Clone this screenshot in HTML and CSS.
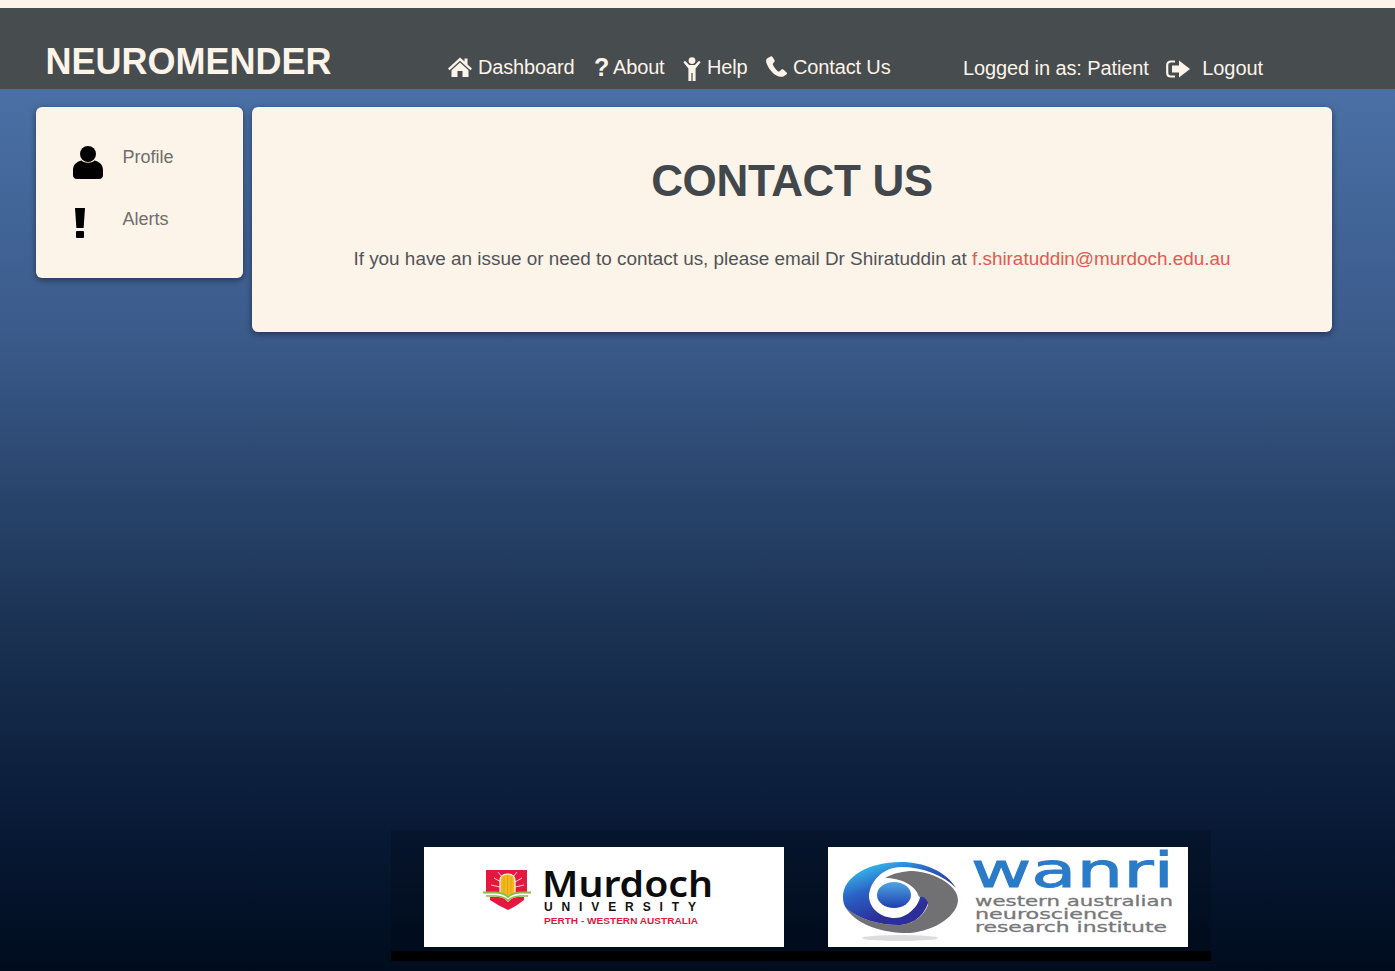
FILE: index.html
```html
<!DOCTYPE html>
<html>
<head>
<meta http-equiv="Content-Type" content="text/html; charset=utf-8"/>
<title>Neuromender</title>
<link rel="stylesheet" href="styles.css">
</head>
<body>

<header class="topbar">
  <a class="brand" href="#">NEUROMENDER</a>
  <nav class="mainnav">
    <a href="#">
      <svg class="ico ico-home" viewBox="0 0 24 20"><path d="M12 0.5 L16.5 4.6 V1.5 H19.5 V7.4 L24 11.5 L22.4 13.2 L12 3.8 L1.6 13.2 L0 11.5 Z"/><path d="M12 5.6 L20.5 13.2 V20 H14.5 V14 H9.5 V20 H3.5 V13.2 Z"/></svg>
      Dashboard</a>
    <a href="#"><span class="ico-q">?</span>About</a>
    <a href="#">
      <svg class="ico ico-help" viewBox="0 0 18 24"><circle cx="9" cy="3.6" r="3.4"/><path d="M0.4 5.2 L2 3.8 L6.2 8 H11.8 L16 3.8 L17.6 5.2 L12.6 11.4 V24 H9.6 V16 H8.4 V24 H5.4 V11.4 Z"/></svg>
      Help</a>
    <a href="#">
      <svg class="ico ico-phone" viewBox="0 0 21 21"><path d="M4.6 0.4 L1.4 2.2 C0.2 3 -0.2 4.6 0.3 6.4 C1.5 10.4 5.4 16.6 10.6 19.6 C13 21 15.6 21.2 17.4 20.4 L20.4 18.4 C21.2 17.8 21.2 17 20.6 16.4 L17.4 13.6 C16.8 13 16 13 15.4 13.6 L13.6 15.2 C13 15.6 12.4 15.6 11.8 15.2 C9.6 13.4 7.8 11 6.8 8.6 C6.6 8 6.8 7.6 7.2 7.2 L8.4 5.8 C8.8 5.2 8.8 4.6 8.4 4 L6.4 0.8 C6 0.2 5.2 0 4.6 0.4 Z"/></svg>
      Contact Us</a>
  </nav>
  <div class="userbox">
    <span>Logged in as: Patient</span>
    <a href="#">
      <svg class="ico ico-logout" viewBox="0 0 24 18"><path class="bracket" d="M9 1.5 H5 C2.6 1.5 1.2 2.9 1.2 5.3 V12.7 C1.2 15.1 2.6 16.5 5 16.5 H9"/><path d="M6 5.5 H13 V0.5 L24 9 L13 17.5 V12.5 H6 Z"/></svg>
      Logout</a>
  </div>
</header>

<div class="content">
  <aside class="sidebar card">
    <a class="sideitem" href="#">
      <span class="sideicon">
        <svg class="ico-profile" viewBox="0 0 30 33"><circle cx="15" cy="8" r="8"/><path d="M8.5 14.5 C11 17.5 19 17.5 21.5 14.5 C26.5 15.5 30 19 30 24 V29 C30 31.5 28.5 33 26 33 H4 C1.5 33 0 31.5 0 29 V24 C0 19 3.5 15.5 8.5 14.5 Z"/></svg>
      </span>
      Profile</a>
    <a class="sideitem" href="#">
      <span class="sideicon">
        <svg class="ico-alert" viewBox="0 0 10 30"><path d="M0 0 H10 L8.6 20 H1.4 Z"/><rect x="1" y="23" width="8" height="7" rx="1"/></svg>
      </span>
      Alerts</a>
  </aside>

  <main class="panel card">
    <h1>CONTACT US</h1>
    <p>If you have an issue or need to contact us, please email Dr Shiratuddin at <a href="#">f.shiratuddin@murdoch.edu.au</a></p>
  </main>
</div>

<footer class="logos">
  <div class="logorow">
    <svg class="logo" viewBox="0 0 360 100">
      <!-- shield -->
      <path d="M62 23 H103 V47 H62 Z" fill="#e4173e"/>
      <path d="M66 50 H100 V53 C95 57 90 60 84 63 C78 60 72 57 66 53 Z" fill="#e4173e"/>
      <path d="M70 31 L77 35 M67 38 L76 40 M98 31 L91 35 M100 38 L91 40 M74 25 L78 30 M93 25 L89 30" stroke="#fff" stroke-width="0.8"/>
      <path d="M76 49 V34 C76 29 79 27 83.5 27 C88 27 91 29 91 34 V49 Z" fill="#f5b81f" stroke="#fff" stroke-width="1.2"/>
      <path d="M80 30 V48 M83.5 28 V48 M87 30 V48" stroke="#dd9a14" stroke-width="0.7"/>
      <path d="M60 47.3 H72 Q80 47.8 84 51.8 Q88 47.8 96 47.3 H106" fill="none" stroke="#fff" stroke-width="4.5"/>
      <path d="M59 45.5 H72 Q80 46 84 50 Q88 46 96 45.5 H107" fill="none" stroke="#8cbb45" stroke-width="1.8"/>
      <path d="M62 49 H72 Q80 49.5 84 53.5 Q88 49.5 96 49 H104" fill="none" stroke="#8cbb45" stroke-width="1.6"/>
      <text class="mu-name" x="118" y="50" textLength="171" lengthAdjust="spacingAndGlyphs">Murdoch</text>
      <text class="mu-uni" x="120" y="64" textLength="152">UNIVERSITY</text>
      <text class="mu-place" x="120" y="77" textLength="154" lengthAdjust="spacingAndGlyphs">PERTH - WESTERN AUSTRALIA</text>
    </svg>
    <svg class="logo" viewBox="0 0 360 100">
      <defs>
        <linearGradient id="swirlBlue" x1="0" y1="0.2" x2="0.5" y2="1">
          <stop offset="0" stop-color="#35b4ea"/>
          <stop offset="0.35" stop-color="#2a62c4"/>
          <stop offset="0.8" stop-color="#2c2f9a"/>
        </linearGradient>
        <linearGradient id="ballBlue" x1="0" y1="0" x2="0" y2="1">
          <stop offset="0" stop-color="#4fa6e4"/>
          <stop offset="1" stop-color="#1f3fae"/>
        </linearGradient>
      </defs>
      <ellipse cx="72" cy="91" rx="38" ry="3" fill="#dcdcdc"/>
      <path d="M57 31 C66 26 76 24 85 24 C110 26 131 40 130 54 C128 72 100 87 75 86 C50 85 27 76 18 61 C30 72 52 78 70 78 C86 78 96 68 100 58 C98 52 94 49 91 50 C88 38 72 31 57 31 Z" fill="#717173"/>
      <path d="M128 41 C118 24 95 15 73 15 C40 15 15 30 15 50 C15 55 16 58 18 61 C30 72 52 78 70 78 C86 78 96 68 100 56 C99 52 95 49 92 50 C91 58 80 71 67 71 C53 71 42 62 41 50 C41 35 55 20 73 20 C95 20 115 28 128 41 Z" fill="url(#swirlBlue)"/>
      <ellipse cx="66" cy="48" rx="17" ry="13" fill="url(#ballBlue)"/>
      <text class="wa-name" x="143" y="40" textLength="203" lengthAdjust="spacingAndGlyphs">wanri</text>
      <text class="wa-sub" x="147" y="59" textLength="198" lengthAdjust="spacingAndGlyphs">western australian</text>
      <text class="wa-sub" x="147" y="72" textLength="148" lengthAdjust="spacingAndGlyphs">neuroscience</text>
      <text class="wa-sub" x="147" y="85" textLength="192" lengthAdjust="spacingAndGlyphs">research institute</text>
    </svg>
  </div>
</footer>

</body>
</html>
```

FILE: styles.css
```css
html, body {
  margin: 0;
  padding: 0;
}

body {
  height: 971px;
  overflow: hidden;
  display: flex;
  flex-direction: column;
  padding-top: 8px;
  box-sizing: border-box;
  font-family: "Liberation Sans", Arial, sans-serif;
  font-size: 18px;
  background: linear-gradient(#fcf3e9 8px, #4f77ae 8px, #3a5a8a 35%, #1d3557 62%, #081a36 85%, #000c1e 100%);
}

a {
  text-decoration: none;
  color: inherit;
}

/* top bar */
.topbar {
  height: 81px;
  background-color: #474c4f;
  color: #fcf3e9;
  display: flex;
  box-sizing: border-box;
  padding-left: 45.5px;
}

.brand {
  font-size: 36px;
  font-weight: bold;
  line-height: 42px;
  margin-top: 33px;
  width: 402.5px;
}

.mainnav {
  display: flex;
  gap: 18.5px;
  font-size: 20px;
  letter-spacing: -0.15px;
  margin-top: 47px;
  width: 515px;
}

.mainnav a, .userbox a {
  display: flex;
  align-items: center;
  height: 24px;
}

.userbox {
  display: flex;
  gap: 17.5px;
  font-size: 20px;
  letter-spacing: -0.1px;
  line-height: 24px;
  margin-top: 48px;
}

.ico {
  fill: #fcf3e9;
  flex: none;
}

.ico-home {
  width: 24px;
  height: 20px;
  margin-right: 6px;
}

.ico-q {
  font-size: 25px;
  font-weight: bold;
  width: 20px;
  padding-left: 1px;
  box-sizing: border-box;
}

.ico-help {
  width: 18px;
  height: 24px;
  margin-right: 6px;
  margin-top: 3px;
}

.ico-phone {
  width: 21px;
  height: 21px;
  margin-right: 6px;
  margin-top: -2px;
}

.ico-logout {
  width: 24px;
  height: 18px;
  margin-right: 12px;
  margin-top: 1px;
}

.ico-logout .bracket {
  fill: none;
  stroke: #fcf3e9;
  stroke-width: 2.2;
}

/* cards */
.content {
  display: flex;
  align-items: flex-start;
  gap: 9px;
  padding: 18px 0 0 36px;
}

.card {
  background-color: #fcf3e9;
  border-radius: 6px;
  box-shadow: 0 2px 6px rgba(0, 0, 0, 0.45);
}

.sidebar {
  width: 207px;
  height: 171px;
  box-sizing: border-box;
  padding-top: 39px;
  color: #6e6e6c;
}

.sideitem {
  display: flex;
  height: 62px;
  line-height: 22px;
  padding-left: 37px;
}

.sideicon {
  width: 49.5px;
  flex: none;
}

.ico-profile {
  display: block;
  width: 30px;
  height: 33px;
}

.ico-alert {
  display: block;
  width: 10px;
  height: 30px;
  margin-left: 2px;
}

.panel {
  width: 1080px;
  height: 225px;
  text-align: center;
  color: #505457;
}

.panel h1 {
  margin: 48px 0 0;
  font-size: 44px;
  line-height: 52px;
  letter-spacing: -0.35px;
  color: #41474a;
}

.panel p {
  margin: 39px 0 0;
  font-size: 18.9px;
  line-height: 26px;
}

.panel p a {
  color: #e25a50;
}

/* footer logos */
.logos {
  margin-top: auto;
  margin-left: 391px;
  margin-bottom: 10px;
  width: 820px;
  height: 131px;
  box-sizing: border-box;
  background-color: rgba(0, 0, 0, 0.15);
  border-bottom: 10px solid #000;
}

.logorow {
  display: flex;
  gap: 44px;
  padding: 17px 0 0 33px;
}

.logo {
  display: block;
  width: 360px;
  height: 100px;
  background-color: #fff;
  overflow: visible;
}

.mu-name {
  font: 600 36px "Noto Sans", sans-serif;
  fill: #0c0c0c;
}

.mu-uni {
  font: bold 12px "Liberation Sans", sans-serif;
  fill: #111;
}

.mu-place {
  font: bold 9px "Liberation Sans", sans-serif;
  fill: #e4173e;
}

.wa-name {
  font: 48px "DejaVu Sans", sans-serif;
  fill: #2a7bc8;
  stroke: #2a7bc8;
  stroke-width: 0.9;
}

.wa-sub {
  font: 14px "DejaVu Sans", sans-serif;
  fill: #77787a;
  stroke: #77787a;
  stroke-width: 0.3;
}
```
